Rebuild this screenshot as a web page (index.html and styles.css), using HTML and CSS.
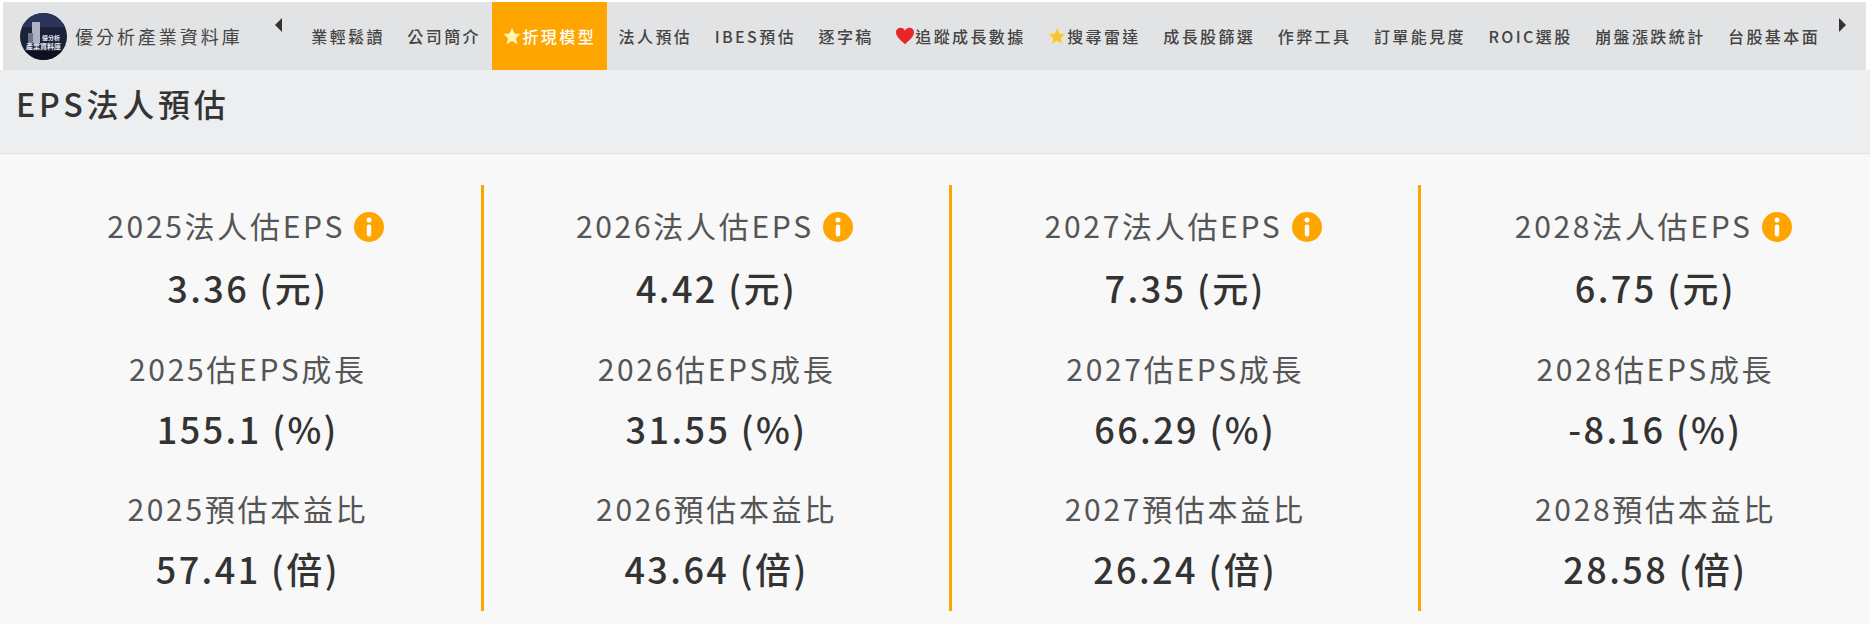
FILE: index.html
```html
<!DOCTYPE html>
<html lang="zh-Hant">
<head>
<meta charset="utf-8">
<title>EPS法人預估</title>
<link rel="stylesheet" href="styles.css">
</head>
<body>
<nav class="nav">
  <div class="brand">
    <svg class="logo" viewBox="0 0 47 47">
      <defs><clipPath id="c"><circle cx="23.5" cy="23.5" r="23.5"/></clipPath></defs>
      <circle cx="23.5" cy="23.5" r="23.5" fill="#1a2138"/>
      <g clip-path="url(#c)">
        <rect x="0" y="0" width="47" height="14" fill="#2a3358"/>
        <rect x="12" y="9" width="8" height="21" fill="#aab2c4"/>
        <rect x="8" y="20" width="5" height="10" fill="#6d7488"/>
        <rect x="0" y="38" width="47" height="9" fill="#0d1020"/>
        <text x="22" y="27" class="logo-a">優分析</text>
        <text x="23.5" y="36" class="logo-b">產業資料庫</text>
      </g>
    </svg>
    <span class="brand-name">優分析產業資料庫</span>
  </div>
  <span class="arrow arrow-left"></span>
  <ul class="menu">
    <li class="item">業輕鬆讀</li>
    <li class="item">公司簡介</li>
    <li class="item active"><svg class="ico" viewBox="1 1 22 22"><path fill="#fff3b0" d="M12 2l3 7 7.500 .7-5.700 4.900 1.800 7.400L12 18l-6.600 4 1.800-7.400L1.500 9.700 9 9z"/></svg>折現模型</li>
    <li class="item">法人預估</li>
    <li class="item">IBES預估</li>
    <li class="item">逐字稿</li>
    <li class="item"><svg class="ico" viewBox="1 2 22 20"><path fill="#e8252b" d="M12 22C5 16 1 12 1 7.500 1 4 3.600 2 6.500 2 9 2 11 3.300 12 5.500 13 3.300 15 2 17.500 2 20.400 2 23 4 23 7.500 23 12 19 16 12 22z"/></svg>追蹤成長數據</li>
    <li class="item"><svg class="ico" viewBox="1 1 22 22"><path fill="#f7c531" stroke="#f3e3a0" d="M12 2l3 7 7.500 .7-5.700 4.900 1.800 7.400L12 18l-6.600 4 1.800-7.400L1.500 9.700 9 9z"/></svg>搜尋雷達</li>
    <li class="item">成長股篩選</li>
    <li class="item">作弊工具</li>
    <li class="item">訂單能見度</li>
    <li class="item">ROIC選股</li>
    <li class="item">崩盤漲跌統計</li>
    <li class="item">台股基本面</li>
  </ul>
  <span class="arrow arrow-right"></span>
</nav>
<header class="head"><h1 class="title">EPS法人預估</h1></header>
<main class="board">
  <section class="col">
    <div class="stat first"><div class="label">2025法人估EPS <svg class="info" viewBox="0 0 30 30"><circle cx="15" cy="15" r="15" fill="#ffa500"/><circle cx="15" cy="8" r="2.500" fill="#fff"/><rect x="12.800" y="12.500" width="4.400" height="12" rx="2" fill="#fff"/></svg></div><div class="value">3.36 (元)</div></div>
    <div class="stat"><div class="label">2025估EPS成長</div><div class="value">155.1 (%)</div></div>
    <div class="stat"><div class="label">2025預估本益比</div><div class="value">57.41 (倍)</div></div>
  </section>
  <section class="col">
    <div class="stat first"><div class="label">2026法人估EPS <svg class="info" viewBox="0 0 30 30"><circle cx="15" cy="15" r="15" fill="#ffa500"/><circle cx="15" cy="8" r="2.500" fill="#fff"/><rect x="12.800" y="12.500" width="4.400" height="12" rx="2" fill="#fff"/></svg></div><div class="value">4.42 (元)</div></div>
    <div class="stat"><div class="label">2026估EPS成長</div><div class="value">31.55 (%)</div></div>
    <div class="stat"><div class="label">2026預估本益比</div><div class="value">43.64 (倍)</div></div>
  </section>
  <section class="col">
    <div class="stat first"><div class="label">2027法人估EPS <svg class="info" viewBox="0 0 30 30"><circle cx="15" cy="15" r="15" fill="#ffa500"/><circle cx="15" cy="8" r="2.500" fill="#fff"/><rect x="12.800" y="12.500" width="4.400" height="12" rx="2" fill="#fff"/></svg></div><div class="value">7.35 (元)</div></div>
    <div class="stat"><div class="label">2027估EPS成長</div><div class="value">66.29 (%)</div></div>
    <div class="stat"><div class="label">2027預估本益比</div><div class="value">26.24 (倍)</div></div>
  </section>
  <section class="col last">
    <div class="stat first"><div class="label">2028法人估EPS <svg class="info" viewBox="0 0 30 30"><circle cx="15" cy="15" r="15" fill="#ffa500"/><circle cx="15" cy="8" r="2.500" fill="#fff"/><rect x="12.800" y="12.500" width="4.400" height="12" rx="2" fill="#fff"/></svg></div><div class="value">6.75 (元)</div></div>
    <div class="stat"><div class="label">2028估EPS成長</div><div class="value">-8.16 (%)</div></div>
    <div class="stat"><div class="label">2028預估本益比</div><div class="value">28.58 (倍)</div></div>
  </section>
</main>
</body>
</html>
```

FILE: styles.css
```css
* { box-sizing: border-box; }
html, body { margin: 0; padding: 0; height: 100%; overflow: hidden; }
body {
  background: #fff;
  color: #333;
  font-family: "Noto Sans CJK TC", "Noto Sans", sans-serif;
}
.nav {
  display: flex;
  align-items: center;
  height: 68px;
  margin: 2px 4px 0 3px;
  background: #e2e3e5;
}
.brand { display: flex; align-items: center; width: 270px; padding-left: 17px; flex: none; }
.logo { width: 47px; height: 47px; flex: none; margin-top: 0; }
.logo-a { font-size: 6px; fill: #e8eaf0; font-weight: 700; }
.logo-b { font-size: 7px; fill: #e8eaf0; font-weight: 700; text-anchor: middle; }
.brand-name {
  margin-left: 8px;
  font-size: 18px;
  letter-spacing: 2.950px;
  color: #444;
  white-space: nowrap;
}
.arrow { flex: none; width: 0; height: 0; border-top: 7px solid transparent; border-bottom: 7px solid transparent; align-self: flex-start; margin-top: 16px; }
.arrow-left { border-right: 7px solid #333; margin-left: 2px; margin-right: 18px; }
.arrow-right { border-left: 7px solid #333; margin-left: 8px; }
.menu {
  display: flex;
  align-items: stretch;
  list-style: none;
  margin: 0;
  padding: 0;
  height: 100%;
  flex: none;
}
.item {
  display: flex;
  align-items: center;
  padding: 0 11.250px;
  font-size: 16px;
  font-weight: 500;
  letter-spacing: 2.400px;
  color: #444;
  white-space: nowrap;
}
.item.active { background: #ffa500; color: #fff; }
.ico { width: 18px; height: 18px; flex: none; margin-right: 1px; }
.head {
  height: 84px;
  background: #eceef0;
  border-bottom: 1px solid #e2e3e5;
  padding-left: 16px;
}
.title {
  margin: 0;
  font-size: 32px;
  font-weight: 500;
  line-height: 66px;
  letter-spacing: 3.800px;
  color: #333;
}
.board {
  display: grid;
  grid-template-columns: repeat(4, 468.700px);
  height: 470px;
  padding: 31px 0 0 15px;
  background: #f8f8f8;
  overflow: hidden;
}
.col {
  height: 426px;
  padding: 20px 0 0;
  border-right: 3px solid #ffa500;
  text-align: center;
}
.col.last { border-right: 0; padding-right: 0; }
.stat { margin-bottom: 36px; }
.stat.first { margin-bottom: 37px; }
.label {
  font-size: 30px;
  line-height: 40px;
  letter-spacing: 2.700px;
  color: #555;
  margin-bottom: 16px;
}
.first .label { margin-bottom: 18px; padding-right: 4px; }
.value {
  font-size: 36px;
  font-weight: 500;
  line-height: 48px;
  letter-spacing: 2.400px;
  color: #333;
}
.info { width: 30px; height: 30px; vertical-align: -4px; }
```
